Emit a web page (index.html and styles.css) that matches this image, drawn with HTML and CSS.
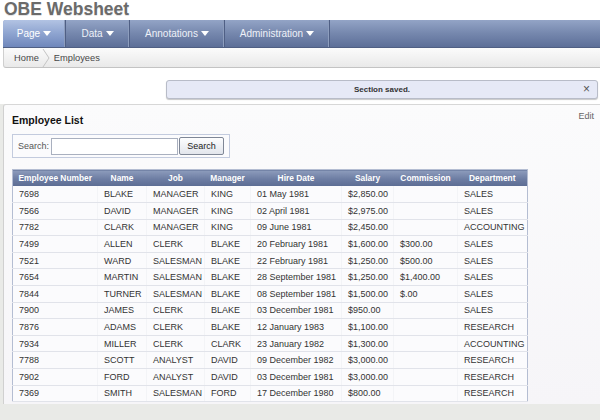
FILE: index.html
```html
<!DOCTYPE html>
<html>
<head>
<meta charset="utf-8">
<link rel="stylesheet" href="styles.css">
</head>
<body>
<div class="title">OBE Websheet</div>
<nav class="tabs">
  <div class="tab active w-page">Page <span class="tri"></span></div>
  <div class="tab w-data">Data <span class="tri"></span></div>
  <div class="tab w-ann">Annotations <span class="tri"></span></div>
  <div class="tab w-adm">Administration <span class="tri"></span></div>
</nav>
<div class="crumbs">
  <span>Home</span>
  <svg class="chev" width="8" height="18" viewBox="0 0 8 18"><path d="M1 0 L7 9 L1 18" fill="none" stroke="#c4c4c4" stroke-width="1"/></svg>
  <span>Employees</span>
</div>
<div class="msgwrap">
  <div class="msg">Section saved.<span class="close">×</span></div>
</div>
<div class="main">
  <div class="region">
    <div class="rhead">
      <div class="rtitle">Employee List</div>
      <div class="edit">Edit</div>
    </div>
    <div class="searchbox">
      <label class="slabel">Search:</label>
      <input class="sinput" type="text">
      <button class="sbtn">Search</button>
    </div>
    <table class="report">
      <colgroup>
        <col class="c1"><col class="c2"><col class="c3"><col class="c4"><col class="c5"><col class="c6"><col class="c7"><col class="c8">
      </colgroup>
      <thead>
        <tr><th>Employee Number</th><th>Name</th><th>Job</th><th>Manager</th><th>Hire Date</th><th>Salary</th><th>Commission</th><th>Department</th></tr>
      </thead>
      <tbody>
        <tr><td>7698</td><td>BLAKE</td><td>MANAGER</td><td>KING</td><td>01 May 1981</td><td>$2,850.00</td><td></td><td>SALES</td></tr>
        <tr><td>7566</td><td>DAVID</td><td>MANAGER</td><td>KING</td><td>02 April 1981</td><td>$2,975.00</td><td></td><td>SALES</td></tr>
        <tr><td>7782</td><td>CLARK</td><td>MANAGER</td><td>KING</td><td>09 June 1981</td><td>$2,450.00</td><td></td><td>ACCOUNTING</td></tr>
        <tr><td>7499</td><td>ALLEN</td><td>CLERK</td><td>BLAKE</td><td>20 February 1981</td><td>$1,600.00</td><td>$300.00</td><td>SALES</td></tr>
        <tr><td>7521</td><td>WARD</td><td>SALESMAN</td><td>BLAKE</td><td>22 February 1981</td><td>$1,250.00</td><td>$500.00</td><td>SALES</td></tr>
        <tr><td>7654</td><td>MARTIN</td><td>SALESMAN</td><td>BLAKE</td><td>28 September 1981</td><td>$1,250.00</td><td>$1,400.00</td><td>SALES</td></tr>
        <tr><td>7844</td><td>TURNER</td><td>SALESMAN</td><td>BLAKE</td><td>08 September 1981</td><td>$1,500.00</td><td>$.00</td><td>SALES</td></tr>
        <tr><td>7900</td><td>JAMES</td><td>CLERK</td><td>BLAKE</td><td>03 December 1981</td><td>$950.00</td><td></td><td>SALES</td></tr>
        <tr><td>7876</td><td>ADAMS</td><td>CLERK</td><td>BLAKE</td><td>12 January 1983</td><td>$1,100.00</td><td></td><td>RESEARCH</td></tr>
        <tr><td>7934</td><td>MILLER</td><td>CLERK</td><td>CLARK</td><td>23 January 1982</td><td>$1,300.00</td><td></td><td>ACCOUNTING</td></tr>
        <tr><td>7788</td><td>SCOTT</td><td>ANALYST</td><td>DAVID</td><td>09 December 1982</td><td>$3,000.00</td><td></td><td>RESEARCH</td></tr>
        <tr><td>7902</td><td>FORD</td><td>ANALYST</td><td>DAVID</td><td>03 December 1981</td><td>$3,000.00</td><td></td><td>RESEARCH</td></tr>
        <tr><td>7369</td><td>SMITH</td><td>SALESMAN</td><td>FORD</td><td>17 December 1980</td><td>$800.00</td><td></td><td>RESEARCH</td></tr>
      </tbody>
    </table>
  </div>
</div>
</body>
</html>
```

FILE: styles.css
```css
html, body {
  margin: 0;
  padding: 0;
  background: #ffffff;
  font-family: "Liberation Sans", Arial, sans-serif;
  height: 100%;
  overflow: hidden;
}
body {
  display: flex;
  flex-direction: column;
}
.title {
  height: 20px;
  padding-left: 4px;
  font-size: 17.5px;
  font-weight: bold;
  color: #6b6b6b;
  line-height: 19px;
  text-shadow: 0 1px 0 #e4e4e4;
}
.tabs {
  margin-left: 3px;
  height: 27px;
  display: flex;
  background: linear-gradient(#93a4c6, #7587ad 50%, #5d6f98);
  border-top-left-radius: 3px;
  border-bottom: 1px solid #4f5f83;
}
.tab {
  display: flex;
  align-items: center;
  justify-content: center;
  gap: 3px;
  font-size: 10px;
  color: #eef1f8;
  border-right: 1px solid #4f5f85;
  box-shadow: inset -1px 0 0 #8d9dbd;
  box-sizing: border-box;
}
.tab.active {
  background: linear-gradient(#b2c3e3, #8ea4d0 50%, #6f87bb);
  color: #ffffff;
  border-top-left-radius: 3px;
}
.w-page { width: 63px; }
.w-data { width: 64px; }
.w-ann { width: 95px; }
.w-adm { width: 105px; }
.tri {
  width: 0;
  height: 0;
  border-left: 4px solid transparent;
  border-right: 4px solid transparent;
  border-top: 5px solid #ffffff;
}
.crumbs {
  margin-left: 3px;
  height: 20px;
  display: flex;
  align-items: center;
  gap: 2px;
  padding-left: 10px;
  font-size: 9.3px;
  color: #474747;
  background: linear-gradient(#fbfbfb, #e9e9e9);
  border-left: 1px solid #cfcfcf;
  border-bottom: 1px solid #c3c3c3;
  border-bottom-left-radius: 3px;
  box-sizing: border-box;
}
.chev { margin: 0 2px 0 1px; }
.msgwrap {
  display: flex;
  justify-content: flex-end;
  padding: 12px 2px 0 0;
  height: 19px;
}
.msg {
  position: relative;
  width: 432px;
  height: 19px;
  box-sizing: border-box;
  background: #e6e9f6;
  border: 1px solid #b8bcc8;
  border-radius: 3px;
  box-shadow: 0 1px 1px #c8c8c8;
  font-size: 8px;
  font-weight: bold;
  color: #333333;
  display: flex;
  align-items: center;
  justify-content: center;
}
.close {
  position: absolute;
  right: 7px;
  top: 1px;
  font-size: 12px;
  font-weight: normal;
  color: #555;
  line-height: 14px;
}
.main {
  margin-top: 5px;
  flex: 1;
  background: #e9eae7;
  display: flex;
  flex-direction: column;
}
.region {
  margin-left: 3px;
  background: linear-gradient(#fbfbfc, #f6f5f8);
  border-top: 1px solid #d7d7d7;
  border-left: 1px solid #d0d0d0;
  border-top-left-radius: 3px;
  padding: 0 0 2px 8px;
}
.rhead {
  display: flex;
  justify-content: space-between;
  height: 29px;
}
.rtitle {
  padding-top: 9px;
  font-size: 10.5px;
  font-weight: bold;
  color: #111111;
}
.edit {
  padding-top: 6px;
  padding-right: 6px;
  font-size: 9px;
  color: #666666;
}
.searchbox {
  width: 218px;
  height: 24px;
  box-sizing: border-box;
  border: 1px solid #c3cbde;
  background: #fbfbfd;
  display: flex;
  align-items: center;
  padding-left: 5px;
}
.slabel {
  font-size: 9px;
  color: #555;
  margin-right: 2px;
}
.sinput {
  width: 127px;
  height: 17px;
  box-sizing: border-box;
  border: 1px solid #a9b0bf;
  margin: 0;
  padding: 0;
  background: #fff;
}
.sbtn {
  margin-left: 1px;
  width: 45px;
  height: 18px;
  box-sizing: border-box;
  padding: 0;
  font-family: "Liberation Sans", Arial, sans-serif;
  font-size: 9px;
  color: #222;
  border: 1px solid #7f8796;
  border-radius: 2px;
  background: linear-gradient(#fdfdfe, #e2e5ec);
}
.report {
  margin-top: 11px;
  border-collapse: collapse;
  table-layout: fixed;
  width: 515px;
  border: 1px solid #b4bdd2;
  background: #fbfbfd;
}
.c1 { width: 85px; }
.c2 { width: 49px; }
.c3 { width: 58px; }
.c4 { width: 46px; }
.c5 { width: 91px; }
.c6 { width: 52px; }
.c7 { width: 64px; }
.c8 { width: 70px; }
.report th {
  height: 16px;
  padding: 0;
  font-size: 8.4px;
  font-weight: bold;
  color: #ffffff;
  text-align: center;
  background: linear-gradient(#8d9cbc, #6c7ca2 55%, #5c6c93);
  white-space: nowrap;
}
.report td {
  height: 16.6px;
  box-sizing: border-box;
  padding: 0 0 0 6px;
  font-size: 9px;
  color: #333333;
  white-space: nowrap;
  overflow: hidden;
  border-bottom: 1px solid #e1e3ea;
  border-left: 1px solid #f3f4f7;
}
.report td:first-child { border-left: none; }
```
